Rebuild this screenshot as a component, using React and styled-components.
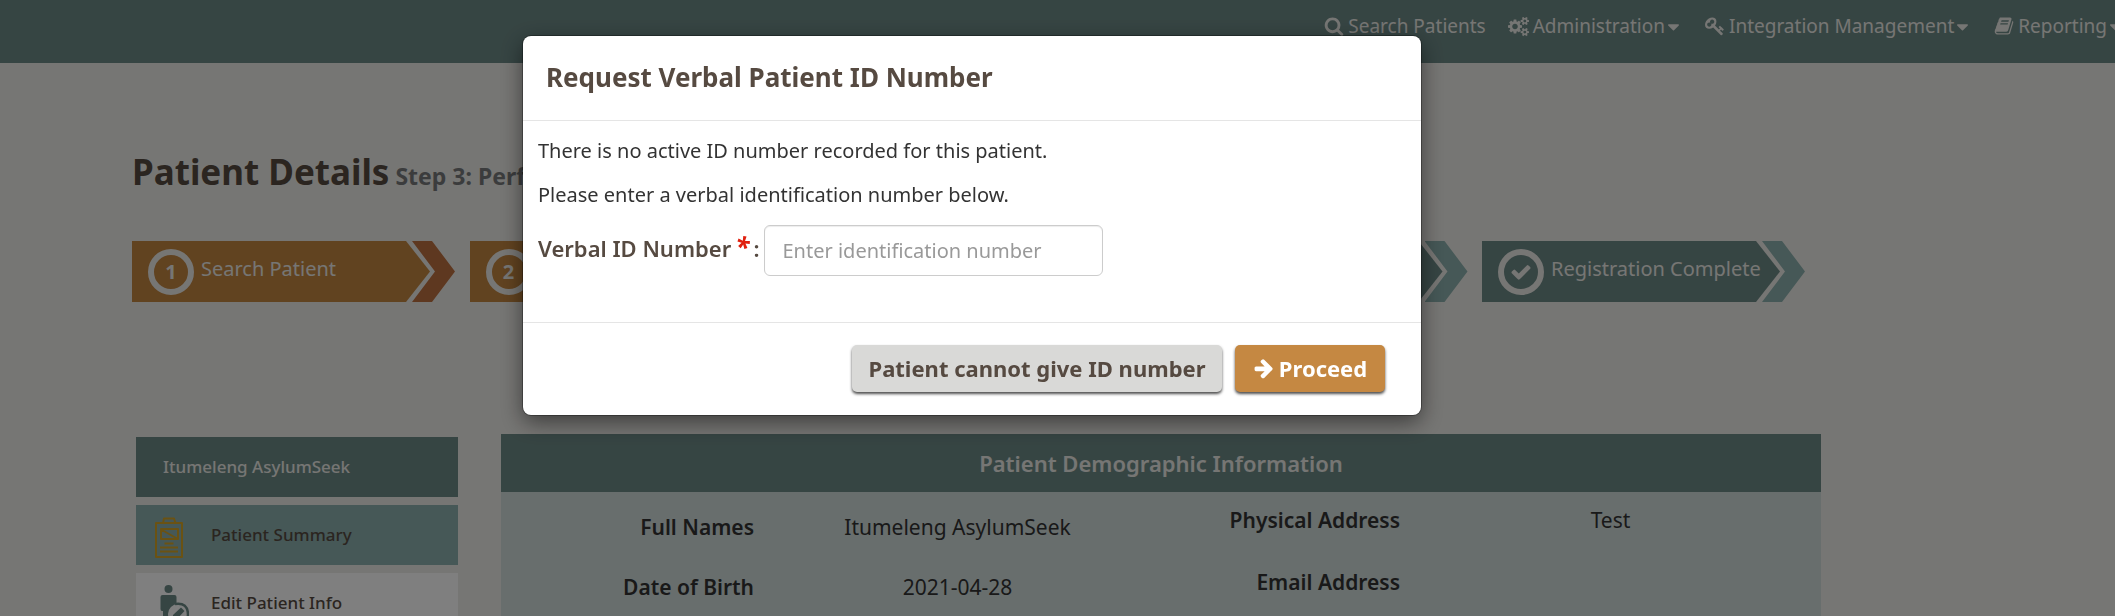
import React from "react";
import styled, { createGlobalStyle, css } from "styled-components";
import { FaCaretDown } from "react-icons/fa";

const Global = createGlobalStyle`
  *, *::before, *::after { box-sizing: border-box; }
  html, body { margin: 0; height: 100%; overflow: hidden; }
  body { background: #edece8; color: #333; font: 20px/28px "Noto Sans", sans-serif; }
  #root { height: 100%; }
  h1, h2, h3, p, ul { margin: 0; padding: 0; }
`;

const iconPaths = {
  search: "M1216 832q0-185-131.5-316.5t-316.5-131.5-316.5 131.5-131.5 316.5 131.5 316.5 316.5 131.5 316.5-131.5 131.5-316.5zm512 832q0 52-38 90t-90 38q-54 0-90-38l-343-342q-179 124-399 124-143 0-273.5-55.5t-225-150-150-225-55.5-273.5 55.5-273.5 150-225 225-150 273.5-55.5 273.5 55.5 225 150 150 225 55.5 273.5q0 220-124 399l343 343q37 37 37 90z",
  arrow: "M1600 960q0 54-37 91l-651 651q-39 37-91 37-51 0-90-37l-75-75q-38-38-38-91t38-91l293-293h-704q-52 0-84.5-37.5t-32.5-90.5v-128q0-53 32.5-90.5t84.5-37.5h704l-293-294q-38-36-38-90t38-90l75-75q38-38 90-38 53 0 91 38l651 651q37 35 37 90z",
  check: "M1671 566q0 40-28 68l-724 724-136 136q-28 28-68 28t-68-28l-136-136-362-362q-28-28-28-68t28-68l136-136q28-28 68-28t68 28l294 295 656-657q28-28 68-28t68 28l136 136q28 28 28 68z",
  cogs: "M896 896q0-106-75-181t-181-75-181 75-75 181 75 181 181 75 181-75 75-181zm768 512q0-52-38-90t-90-38-90 38-38 90q0 53 37.5 90.5t90.5 37.5 90.5-37.5 37.5-90.5zm0-1024q0-52-38-90t-90-38-90 38-38 90q0 53 37.5 90.5t90.5 37.5 90.5-37.5 37.5-90.5zm-384 421v185q0 10-7 19.5t-16 10.5l-155 24q-11 35-32 76 34 48 90 115 7 11 7 20 0 12-7 19-23 30-82.5 89.5t-78.5 59.5q-11 0-21-7l-115-90q-37 19-77 31-11 108-23 155-7 24-30 24h-186q-11 0-20-7.5t-10-17.5l-23-153q-34-10-75-31l-118 89q-7 7-20 7-11 0-21-8-144-133-144-160 0-9 7-19 10-14 41-53t47-61q-23-44-35-82l-152-24q-10-1-17-9.5t-7-19.5v-185q0-10 7-19.5t16-10.5l155-24q11-35 32-76-34-48-90-115-7-11-7-20 0-12 7-20 22-30 82-89t79-59q11 0 21 7l115 90q34-18 77-32 11-108 23-154 7-24 30-24h186q11 0 20 7.5t10 17.5l23 153q34 10 75 31l118-89q8-7 20-7 11 0 21 8 144 133 144 160 0 8-7 19-12 16-42 54t-45 60q23 48 34 82l152 23q10 2 17 10.5t7 19.5zm640 533v140q0 16-149 31-12 27-30 52 51 113 51 138 0 4-4 7-122 71-124 71-8 0-46-47t-52-68q-20 2-30 2t-30-2q-14 21-52 68t-46 47q-2 0-124-71-4-3-4-7 0-25 51-138-18-25-30-52-149-15-149-31v-140q0-16 149-31 13-29 30-52-51-113-51-138 0-4 4-7 4-2 35-20t59-34 30-16q8 0 46 46.5t52 67.5q20-2 30-2t30 2q51-71 92-112l6-2q4 0 124 70 4 3 4 7 0 25-51 138 17 23 30 52 149 15 149 31zm0-1024v140q0 16-149 31-12 27-30 52 51 113 51 138 0 4-4 7-122 71-124 71-8 0-46-47t-52-68q-20 2-30 2t-30-2q-14 21-52 68t-46 47q-2 0-124-71-4-3-4-7 0-25 51-138-18-25-30-52-149-15-149-31v-140q0-16 149-31 13-29 30-52-51-113-51-138 0-4 4-7 4-2 35-20t59-34 30-16q8 0 46 46.5t52 67.5q20-2 30-2t30 2q51-71 92-112l6-2q4 0 124 70 4 3 4 7 0 25-51 138 17 23 30 52 149 15 149 31z",
  key: "M832 512q0-80-56-136t-136-56-136 56-56 136q0 42 19 83-41-19-83-19-80 0-136 56t-56 136 56 136 136 56 136-56 56-136q0-42-19-83 41 19 83 19 80 0 136-56t56-136zm851 704q0 17-49 66t-66 49q-9 0-28.5-16t-36.5-33-38.5-40-24.5-26l-96 96 220 220q28 28 28 68 0 42-39 81t-81 39q-40 0-68-28l-671-671q-176 131-365 131-163 0-265.5-102.5t-102.5-265.5q0-160 95-313t248-248 313-95q163 0 265.5 102.5t102.5 265.5q0 189-131 365l355 355 96-96q-3-3-26-24.5t-40-38.5-33-36.5-16-28.5q0-17 49-66t66-49q13 0 23 10 6 6 46 44.5t82 79.5 86.5 86 73 78 28.5 41z",
  book: "M1703 478q40 57 18 129l-275 906q-19 64-76.5 107.5t-122.5 43.5h-923q-77 0-148.5-53.5t-99.5-131.5q-24-67-2-127 0-4 3-27t4-37q1-8-3-21.5t-3-19.5q2-11 8-21t16.5-23.5 16.5-23.5q23-38 45-91.5t30-91.5q3-10 .5-30t-.5-28q3-11 17-28t17-23q21-36 42-92t25-90q1-9-2.5-32t.5-28q4-13 22-30.5t22-22.5q19-26 42.5-84.5t27.5-96.5q1-8-3-25.5t-2-26.5q2-8 9-18t18-23 17-21q8-12 16.5-30.5t15-35 16-36 19.5-32 26.5-23.5 36-11.5 47.5 5.5l-1 3q38-9 51-9h761q74 0 114 56t18 130l-274 906q-36 119-71.5 153.5t-128.5 34.5h-869q-27 0-38 15-11 16-1 43 24 70 144 70h923q29 0 56-15.5t35-41.5l300-987q7-22 5-57 38 15 59 43zm-1064 2q-4 13 2 22.5t20 9.5h608q13 0 25.5-9.5t16.5-22.5l21-64q4-13-2-22.5t-20-9.5h-608q-13 0-25.5 9.5t-16.5 22.5zm-83 256q-4 13 2 22.5t20 9.5h608q13 0 25.5-9.5t16.5-22.5l21-64q4-13-2-22.5t-20-9.5h-608q-13 0-25.5 9.5t-16.5 22.5z",
};

const IconSvg = styled.svg`
  flex: none;
  width: ${(p) => p.$size}px;
  height: ${(p) => p.$size}px;
  fill: currentColor;
`;

function Icon({ name, size = 20, box = "0 0 1792 1792" }) {
  return (
    <IconSvg $size={size} viewBox={box} aria-hidden="true">
      <path d={iconPaths[name]} />
    </IconSvg>
  );
}

const Page = styled.div`
  height: 100%;
  overflow: hidden;
`;

const NavBar = styled.nav`
  display: flex;
  justify-content: flex-end;
  height: 63px;
  padding-top: 12px;
  background: #6d8a87;
  overflow: hidden;
`;

const NavLink = styled.a`
  display: flex;
  flex: none;
  align-items: center;
  gap: 4px;
  height: 28px;
  margin-left: 22px;
  color: #edece8;
  font-size: 19px;
  text-decoration: none;
  white-space: nowrap;
  &:last-child { margin-right: -10px; }
`;

const Caret = styled(FaCaretDown)`
  margin-left: -5px;
`;

const Content = styled.main`
  padding: 87px 294px 0 132px;
`;

const Title = styled.h1`
  display: flex;
  align-items: baseline;
  gap: 6px;
  color: #564a41;
  font-size: 35px;
  line-height: 44px;
  font-weight: 700;
  white-space: nowrap;
`;

const Subtitle = styled.small`
  color: #77797a;
  font-size: 23px;
`;

const Steps = styled.ol`
  display: flex;
  justify-content: space-between;
  margin: 43px 16px 0 0;
  padding: 0;
  list-style: none;
`;

const StepItem = styled.li`
  display: flex;
  width: 323px;
  height: 61px;
`;

const StepBody = styled.div`
  display: flex;
  flex: 1;
  align-items: center;
  gap: 7px;
  padding-left: 16px;
  background: ${(p) => (p.$done ? "#c38641" : "#6d8a87")};
  clip-path: polygon(0 0, calc(100% - 24px) 0, 100% 50%, calc(100% - 24px) 100%, 0 100%);
  color: #edece8;
  font-size: 20px;
  white-space: nowrap;
`;

const StepTip = styled.div`
  width: 43px;
  margin-left: -18px;
  background: ${(p) => (p.$done ? "#bd7141" : "#8cb0ae")};
  clip-path: polygon(0 0, 20px 0, 100% 50%, 20px 100%, 0 100%, 23px 50%);
`;

const Badge = styled.span`
  display: flex;
  align-items: center;
  justify-content: center;
  width: 46px;
  height: 46px;
  border: 6px solid #edece8;
  border-radius: 50%;
  font-weight: 700;
`;

const StepLabel = styled.span`
  padding-bottom: 5px;
`;

const Columns = styled.div`
  display: flex;
  align-items: flex-start;
  gap: 43px;
  margin-top: 132px;
`;

const Sidebar = styled.aside`
  display: flex;
  flex: none;
  flex-direction: column;
  gap: 8px;
  width: 322px;
  margin: 3px 0 0 4px;
`;

const sideBox = css`
  display: flex;
  align-items: center;
  height: 60px;
  font-size: 17px;
  font-weight: 500;
  text-decoration: none;
`;

const PatientName = styled.div`
  ${sideBox}
  padding-left: 27px;
  background: #6d8a87;
  color: #edece8;
`;

const SideLink = styled.a`
  ${sideBox}
  padding-left: 14px;
  gap: 22px;
  background: ${(p) => (p.$active ? "#8cb0ae" : "#fff")};
  color: #564a41;
`;

const SideIcon = styled.svg`
  width: 39px;
  height: 48px;
  fill: none;
`;

const Panel = styled.section`
  flex: 1;
  min-height: 400px;
  background: #d0dcdb;
`;

const PanelTitle = styled.h2`
  display: flex;
  align-items: center;
  justify-content: center;
  height: 58px;
  background: #6d8a87;
  color: #edece8;
  font-size: 22px;
  font-weight: 600;
`;

const PanelGrid = styled.div`
  display: grid;
  grid-template-columns: 1fr 1fr;
`;

const Details = styled.dl`
  display: grid;
  grid-template-columns: ${(p) => p.$term} 1fr;
  grid-auto-rows: ${(p) => p.$row};
  align-content: start;
  margin: 0;
  padding-top: ${(p) => p.$top};
  color: #333;
  font-size: 21px;
`;

const Term = styled.dt`
  font-weight: 600;
  text-align: right;
`;

const Value = styled.dd`
  margin: 0;
  text-align: center;
`;

const Overlay = styled.div`
  position: fixed;
  inset: 0;
  padding: 36px 171px 36px 0;
  background: rgba(0, 0, 0, 0.5);
`;

const Dialog = styled.form`
  width: 898px;
  max-width: 100%;
  margin: 0 auto;
  border-radius: 8px;
  background: #fff;
  box-shadow: 0 7px 22px rgba(0, 0, 0, 0.5), 0 0 0 1px rgba(0, 0, 0, 0.3);
`;

const DialogHeader = styled.header`
  padding: 26px 23px 27px;
  border-bottom: 1px solid #e5e5e5;
`;

const DialogTitle = styled.h2`
  color: #564a41;
  font-size: 26px;
  line-height: 31px;
  font-weight: 700;
`;

const DialogBody = styled.div`
  padding: 16px 15px 46px;
`;

const Message = styled.p`
  margin-bottom: 16px;
`;

const Field = styled.div`
  display: flex;
  align-items: center;
  gap: 4px;
`;

const FieldLabel = styled.label`
  padding-bottom: 6px;
  color: #564a41;
  font-size: 22px;
  font-weight: 600;
`;

const Required = styled.span`
  margin: 0 4px;
  color: #e0200f;
  font-size: 26px;
  font-style: italic;
  font-weight: 700;
  line-height: 20px;
`;

const TextInput = styled.input`
  width: 339px;
  height: 51px;
  padding: 0 18px;
  border: 1px solid #ccc;
  border-radius: 6px;
  box-shadow: inset 0 1px 1px rgba(0, 0, 0, 0.075);
  font: inherit;
  &::placeholder { color: #999; opacity: 1; }
`;

const DialogFooter = styled.footer`
  display: flex;
  justify-content: flex-end;
  gap: 13px;
  padding: 22px 36px 23px 0;
  border-top: 1px solid #e5e5e5;
`;

const Button = styled.button`
  display: flex;
  align-items: center;
  justify-content: center;
  gap: 4px;
  width: ${(p) => p.$width};
  height: 47px;
  padding: 0 0 2px;
  border: 0;
  border-radius: 5px;
  background: ${(p) => (p.$primary ? "#c58842" : "#d9d9d7")};
  box-shadow: 0 2px 3px rgba(0, 0, 0, 0.7);
  color: ${(p) => (p.$primary ? "#fff" : "#564a41")};
  font: 700 22px/28px "Noto Sans", sans-serif;
  white-space: nowrap;
`;

const steps = [
  { badge: "1", label: "Search Patient", done: true },
  { badge: "2", label: "Patient Details", done: true },
  { badge: "3", label: "Perform Action" },
  { badge: "4", label: "Confirmation" },
  { badge: <Icon name="check" size={22} />, label: "Registration Complete" },
];

const personal = [["Full Names", "Itumeleng AsylumSeek"], ["Date of Birth", "2021-04-28"]];
const contact = [["Physical Address", "Test"], ["Email Address", ""]];

function DetailList({ rows, top, row, term }) {
  return (
    <Details $top={top} $row={row} $term={term}>
      {rows.map(([name, value]) => (
        <React.Fragment key={name}>
          <Term>{name}</Term>
          <Value>{value}</Value>
        </React.Fragment>
      ))}
    </Details>
  );
}

export default function App() {
  return (
    <Page>
      <Global />
      <NavBar>
        <NavLink href="#search"><Icon name="search" />Search Patients</NavLink>
        <NavLink href="#admin"><Icon name="cogs" size={21} box="0 0 1920 1792" />Administration<Caret /></NavLink>
        <NavLink href="#integration"><Icon name="key" />Integration Management<Caret /></NavLink>
        <NavLink href="#reporting"><Icon name="book" />Reporting<Caret /></NavLink>
      </NavBar>
      <Content>
        <Title>Patient Details <Subtitle>Step 3: Perform Action</Subtitle></Title>
        <Steps>
          {steps.map((s) => (
            <StepItem key={s.label}>
              <StepBody $done={s.done}><Badge>{s.badge}</Badge><StepLabel>{s.label}</StepLabel></StepBody>
              <StepTip $done={s.done} />
            </StepItem>
          ))}
        </Steps>
        <Columns>
          <Sidebar>
            <PatientName>Itumeleng AsylumSeek</PatientName>
            <SideLink href="#summary" $active>
              <SideIcon viewBox="0 0 39 48" stroke="#d5a527" strokeWidth="2" strokeLinejoin="round">
                <path d="M6 12H32V46H6ZM13 12L14 7.500H24L25.500 12M11 18H28V28H11ZM12 19L27 27.500M14.500 32.500H23.500M10 36.500H28M10 40.500H28" />
              </SideIcon>
              Patient Summary
            </SideLink>
            <SideLink href="#edit">
              <SideIcon viewBox="0 0 39 48">
                <circle cx="18.500" cy="10" r="4" fill="#6d8a87" />
                <path d="M10.500 18Q10.500 16 12.500 16H24.500Q26.500 16 26.500 18V48H13V32H12Q10.500 32 10.500 30Z" fill="#6d8a87" />
                <circle cx="28" cy="35" r="10" fill="#fff" />
                <path d="M25 25Q38 23 38 36Q37 44 29 45" stroke="#6d8a87" strokeWidth="2.5" />
                <path d="M23 36L31 28.500L34.500 32L27 40L22.500 40.500Z" fill="#6d8a87" />
              </SideIcon>
              Edit Patient Info
            </SideLink>
          </Sidebar>
          <Panel>
            <PanelTitle>Patient Demographic Information</PanelTitle>
            <PanelGrid>
              <DetailList rows={personal} top="21px" row="60px" term="253px" />
              <DetailList rows={contact} top="14px" row="62px" term="239px" />
            </PanelGrid>
          </Panel>
        </Columns>
      </Content>
      <Overlay>
        <Dialog role="dialog" aria-modal="true" aria-labelledby="dialog-title" onSubmit={(e) => e.preventDefault()}>
          <DialogHeader><DialogTitle id="dialog-title">Request Verbal Patient ID Number</DialogTitle></DialogHeader>
          <DialogBody>
            <Message>There is no active ID number recorded for this patient.</Message>
            <Message>Please enter a verbal identification number below.</Message>
            <Field>
              <FieldLabel htmlFor="verbal-id">Verbal ID Number<Required>*</Required>:</FieldLabel>
              <TextInput id="verbal-id" placeholder="Enter identification number" />
            </Field>
          </DialogBody>
          <DialogFooter>
            <Button type="button" $width="370px">Patient cannot give ID number</Button>
            <Button type="submit" $primary $width="150px"><Icon name="arrow" size={22} />Proceed</Button>
          </DialogFooter>
        </Dialog>
      </Overlay>
    </Page>
  );
}
